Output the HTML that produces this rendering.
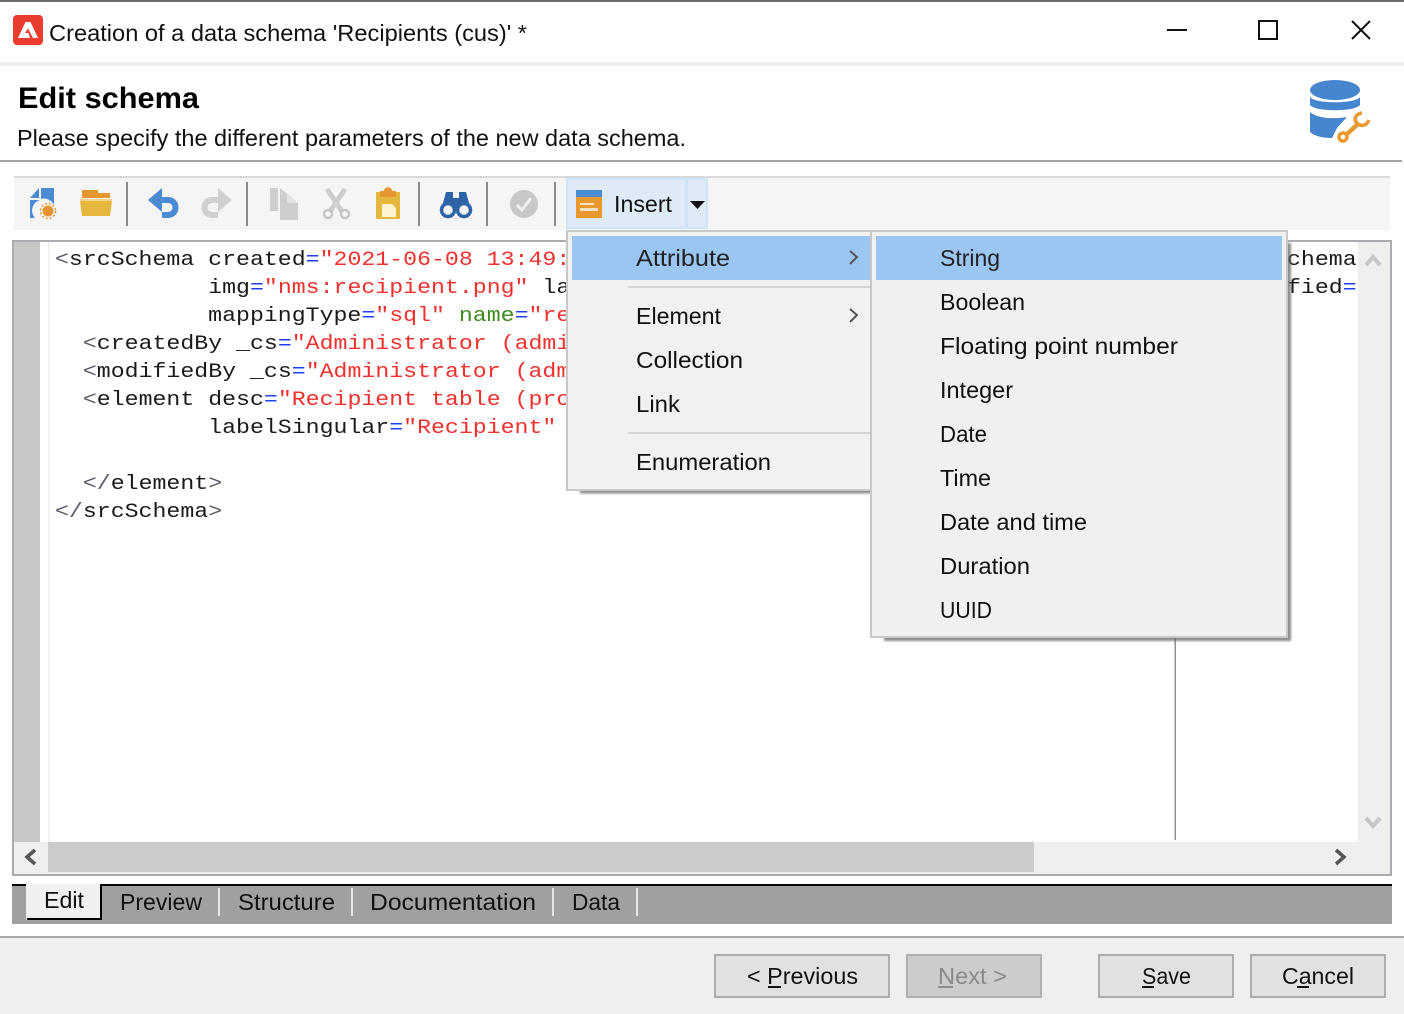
<!DOCTYPE html>
<html><head><meta charset="utf-8"><title>Edit schema</title>
<style>
html,body{margin:0;padding:0;background:#fff;width:1404px;height:1014px;overflow:hidden}
svg{display:block;position:absolute;left:0;top:0}
text{font-family:"Liberation Sans",sans-serif;fill:#111;white-space:pre}
.ui{font-size:23px}
.code text{font-family:"Liberation Mono",monospace;font-size:20px;fill:#1a1a1a}
.g{fill:#5a5a6a}.b{fill:#1c3ff0}.r{fill:#f0302c}.n{fill:#3d8a1e}
</style></head><body>
<svg width="1404" height="1014" viewBox="0 0 1404 1014" xmlns="http://www.w3.org/2000/svg">
<defs>
<filter id="sh" x="-5%" y="-5%" width="112%" height="112%"><feGaussianBlur stdDeviation="1"/></filter>
</defs>
<rect width="1404" height="1014" fill="#fff"/>
<!-- title bar -->
<rect width="1404" height="2" fill="#6d6d6d"/>
<rect x="13" y="15" width="30" height="30" rx="4" fill="#eb3d2f"/>
<path d="M25.500 22 H30.500 L38 38 H33 L28 28.500 L25 33 H28.500 L30 38 H18 Z" fill="#fff"/>
<text class="ui" x="49" y="41" textLength="478" lengthAdjust="spacingAndGlyphs">Creation of a data schema 'Recipients (cus)' *</text>
<rect x="1167" y="29" width="20" height="2" fill="#111"/>
<rect x="1259" y="21" width="18" height="18" fill="none" stroke="#111" stroke-width="2"/>
<path d="M1352 21 L1370 39 M1370 21 L1352 39" stroke="#111" stroke-width="2" fill="none"/>
<rect y="62" width="1404" height="4" fill="#f0f0f0"/>
<!-- header -->
<text x="18" y="108" font-size="30" font-weight="700" textLength="181" lengthAdjust="spacingAndGlyphs" style="fill:#000">Edit schema</text>
<text class="ui" x="17" y="146" textLength="669" lengthAdjust="spacingAndGlyphs">Please specify the different parameters of the new data schema.</text>
<rect y="160" width="1402" height="2" fill="#a5a5a5"/>
<!-- db icon -->
<g>
<ellipse cx="1335" cy="90" rx="25" ry="10" fill="#4686cf"/>
<path d="M1310 97 C1315 104 1355 104 1360 97 V105 C1355 112 1315 112 1310 105 Z" fill="#4686cf"/>
<path d="M1310 112 C1318 119 1335 119 1347 117 L1337 128 L1332 138 C1322 138 1314 136 1310 132 Z" fill="#4686cf"/>
<path d="M1347 134 L1359 123" stroke="#e89a30" stroke-width="4.500" fill="none"/>
<path d="M1362 113 C1355 114 1353 120 1358 124 C1362 127 1367 125 1369 120" stroke="#e89a30" stroke-width="3.500" fill="none"/>
<circle cx="1343" cy="137" r="4" fill="#fff" stroke="#e89a30" stroke-width="3.500"/>
</g>
<!-- toolbar -->
<rect x="14" y="176" width="1376" height="54" fill="#f5f5f5"/>
<rect x="14" y="176" width="1376" height="2" fill="#d9d9d9"/>
<path d="M30 198 L39 188 V198 Z M41 188 H54 V205 A11 11 0 0 0 41 199 Z M30 200 H40 A11 11 0 0 0 35 218 H30 Z" fill="#4a8bd4"/>
<circle cx="48" cy="211" r="5.500" fill="#e8952f"/><circle cx="48" cy="211" r="7.500" fill="none" stroke="#e8952f" stroke-width="1.500" stroke-dasharray="2 2"/>
<path d="M82 190 H98 V193 H110 V198 H82 Z" fill="#e5972f"/>
<rect x="80" y="199" width="32" height="2" fill="#f0d589"/>
<path d="M80 201 H112 L110 216 H82 Z" fill="#e6b73e"/>
<rect x="126" y="182" width="2" height="44" fill="#8a8a8a"/>
<path d="M148 200 L162 188 V212 Z" fill="#4a8bd4"/>
<path d="M160 200 H168 C178 200 178 215 168 215 H162" stroke="#4a8bd4" stroke-width="6" fill="none"/>
<path d="M232 200 L218 188 V212 Z" fill="#d0d0d0"/>
<path d="M220 200 H212 C202 200 202 215 212 215 H218" stroke="#d0d0d0" stroke-width="6" fill="none"/>
<rect x="246" y="182" width="2" height="44" fill="#8a8a8a"/>
<rect x="270" y="188" width="8" height="23" fill="#cdcdcd"/>
<path d="M280 188 L298 203 V220 H280 Z" fill="#cdcdcd"/><path d="M287 203 H298 L287 193 Z" fill="#e2e2e2"/>
<path d="M327 189 L343 213 M345 189 L329 213" stroke="#cdcdcd" stroke-width="5" fill="none"/>
<circle cx="328" cy="214" r="4" fill="#f5f5f5" stroke="#c6c6c6" stroke-width="2.500"/><circle cx="345" cy="214" r="4" fill="#f5f5f5" stroke="#c6c6c6" stroke-width="2.500"/>
<rect x="376" y="192" width="24" height="27" fill="#e6b73e"/>
<path d="M380 191 H384 C384 186 392 186 392 191 H396 V197 H380 Z" fill="#e5972f"/>
<path d="M382 204 H392 L396 208 V217 H382 Z" fill="#fff3d2"/>
<rect x="418" y="182" width="2" height="44" fill="#8a8a8a"/>
<path d="M446 192 H453 V198 H459 V192 H466 L471 210 H441 Z" fill="#2f63a8"/>
<circle cx="448" cy="210" r="6.500" fill="#f5f5f5" stroke="#2f63a8" stroke-width="3.500"/><circle cx="464" cy="210" r="6.500" fill="#f5f5f5" stroke="#2f63a8" stroke-width="3.500"/>
<rect x="486" y="182" width="2" height="44" fill="#8a8a8a"/>
<circle cx="524" cy="204" r="14" fill="#c8c8c8"/>
<path d="M517 205 L522 210 L531 198" stroke="#f0f0f0" stroke-width="3" fill="none"/>
<rect x="554" y="182" width="2" height="44" fill="#8a8a8a"/>
<!-- insert button -->
<rect x="567" y="179" width="119" height="49" fill="#dfeaf7" stroke="#cfe3f8" stroke-width="2"/>
<rect x="687" y="179" width="20" height="49" fill="#dfeaf7" stroke="#cfe3f8" stroke-width="2"/>
<rect x="576" y="190" width="26" height="8" fill="#4a8bd4"/>
<rect x="576" y="197" width="26" height="21" fill="#e8982f"/>
<rect x="580" y="203" width="14" height="2" fill="#f7e3c0"/><rect x="580" y="208" width="18" height="3" fill="#f7e3c0"/>
<text class="ui" x="614" y="212" textLength="58" lengthAdjust="spacingAndGlyphs">Insert</text>
<path d="M690 201 H705 L697.500 209 Z" fill="#111"/>
<!-- editor -->
<rect x="13" y="241" width="1378" height="634" fill="#fff" stroke="#ababb0" stroke-width="2"/>
<rect x="14" y="242" width="26" height="600" fill="#c8c8c8"/>
<rect x="48" y="242" width="1.500" height="600" fill="#eeeeee"/>
<rect x="1358" y="242" width="32" height="600" fill="#efefef"/>
<rect x="14" y="842" width="1376" height="32" fill="#efefef"/>
<rect x="48" y="842" width="986" height="30" fill="#cbcbcb"/>
<rect x="1174.500" y="242" width="1.500" height="598" fill="#8f8f8f"/>
<path d="M1366 265 L1373 257 L1380 265" stroke="#c6c6c6" stroke-width="4" fill="none"/>
<path d="M1366 818 L1373 826 L1380 818" stroke="#c6c6c6" stroke-width="4" fill="none"/>
<path d="M35 850 L27 857 L35 864" stroke="#555" stroke-width="3.500" fill="none"/>
<path d="M1336 850 L1344 857 L1336 864" stroke="#555" stroke-width="3.500" fill="none"/>
<g class="code">
<g transform="translate(55,265) scale(1.161,1)"><text xml:space="preserve"><tspan class="g">&lt;</tspan>srcSchema created<tspan class="b">=</tspan><tspan class="r">"2021-06-08 13:49:</tspan></text></g>
<g transform="translate(55,293) scale(1.161,1)"><text xml:space="preserve">           img<tspan class="b">=</tspan><tspan class="r">"nms:recipient.png"</tspan> la</text></g>
<g transform="translate(55,321) scale(1.161,1)"><text xml:space="preserve">           mappingType<tspan class="b">=</tspan><tspan class="r">"sql"</tspan> <tspan class="n">name</tspan><tspan class="b">=</tspan><tspan class="r">"re</tspan></text></g>
<g transform="translate(55,349) scale(1.161,1)"><text xml:space="preserve">  <tspan class="g">&lt;</tspan>createdBy _cs<tspan class="b">=</tspan><tspan class="r">"Administrator (admi</tspan></text></g>
<g transform="translate(55,377) scale(1.161,1)"><text xml:space="preserve">  <tspan class="g">&lt;</tspan>modifiedBy _cs<tspan class="b">=</tspan><tspan class="r">"Administrator (adm</tspan></text></g>
<g transform="translate(55,405) scale(1.161,1)"><text xml:space="preserve">  <tspan class="g">&lt;</tspan>element desc<tspan class="b">=</tspan><tspan class="r">"Recipient table (pro</tspan></text></g>
<g transform="translate(55,433) scale(1.161,1)"><text xml:space="preserve">           labelSingular<tspan class="b">=</tspan><tspan class="r">"Recipient"</tspan></text></g>
<g transform="translate(55,489) scale(1.161,1)"><text xml:space="preserve">  <tspan class="g">&lt;/</tspan>element<tspan class="g">&gt;</tspan></text></g>
<g transform="translate(55,517) scale(1.161,1)"><text xml:space="preserve"><tspan class="g">&lt;/</tspan>srcSchema<tspan class="g">&gt;</tspan></text></g>
<g transform="translate(1287,265) scale(1.161,1)"><text>chema</text></g>
<g transform="translate(1287,293) scale(1.161,1)"><text>fied<tspan class="b">=</tspan></text></g>
</g>
<!-- tabs -->
<rect x="12" y="884" width="1380" height="40" fill="#a0a0a0"/>
<rect x="12" y="884" width="1380" height="2" fill="#000"/>
<rect x="26" y="884" width="74" height="34" fill="#f0f0f0"/>
<rect x="26" y="918" width="76" height="2" fill="#000"/><rect x="100" y="886" width="2" height="34" fill="#000"/>
<rect x="26" y="918" width="1" height="2" fill="#fff"/>
<text class="ui" x="44" y="908" textLength="40" lengthAdjust="spacingAndGlyphs">Edit</text>
<text class="ui" x="120" y="910" textLength="82" lengthAdjust="spacingAndGlyphs">Preview</text>
<text class="ui" x="238" y="910" textLength="97" lengthAdjust="spacingAndGlyphs">Structure</text>
<text class="ui" x="370" y="910" textLength="166" lengthAdjust="spacingAndGlyphs">Documentation</text>
<text class="ui" x="572" y="910" textLength="48" lengthAdjust="spacingAndGlyphs">Data</text>
<rect x="218" y="888" width="2" height="28" fill="#e6e6e6"/><rect x="351" y="888" width="2" height="28" fill="#e6e6e6"/><rect x="552" y="888" width="2" height="28" fill="#e6e6e6"/><rect x="636" y="888" width="2" height="28" fill="#e6e6e6"/>
<!-- footer -->
<rect y="938" width="1404" height="76" fill="#efefef"/>
<rect y="936" width="1404" height="2" fill="#a8a8a8"/>
<rect x="715" y="955" width="174" height="42" fill="#e1e1e1" stroke="#adadad" stroke-width="2"/>
<rect x="907" y="955" width="134" height="42" fill="#cccccc" stroke="#b0b0b0" stroke-width="2"/>
<rect x="1099" y="955" width="134" height="42" fill="#e1e1e1" stroke="#adadad" stroke-width="2"/>
<rect x="1251" y="955" width="134" height="42" fill="#e1e1e1" stroke="#adadad" stroke-width="2"/>
<text class="ui" x="747" y="984" textLength="111" lengthAdjust="spacingAndGlyphs">&lt; Previous</text>
<rect x="768" y="986" width="13" height="2" fill="#111"/>
<text class="ui" x="938" y="984" textLength="69" lengthAdjust="spacingAndGlyphs" style="fill:#8a8a8a">Next &gt;</text>
<rect x="938" y="986" width="15" height="2" fill="#8a8a8a"/>
<text class="ui" x="1142" y="984" textLength="49" lengthAdjust="spacingAndGlyphs">Save</text>
<rect x="1142" y="986" width="12" height="2" fill="#111"/>
<text class="ui" x="1282" y="984" textLength="72" lengthAdjust="spacingAndGlyphs">Cancel</text>
<rect x="1297" y="986" width="12" height="2" fill="#111"/>
<!-- menu 1 -->
<rect x="580" y="240" width="294" height="253.500" fill="#666" opacity=".75" filter="url(#sh)"/>
<rect x="567" y="231" width="304" height="259" fill="#f1f1f1" stroke="#c8c8c8" stroke-width="2"/>
<rect x="572" y="236" width="298" height="44" fill="#9cc6f2"/>
<rect x="628" y="286" width="242" height="2" fill="#d4d4d4"/>
<rect x="628" y="432" width="242" height="2" fill="#d4d4d4"/>
<text class="ui" x="636" y="266" textLength="94" lengthAdjust="spacingAndGlyphs" style="fill:#222">Attribute</text>
<text class="ui" x="636" y="324" textLength="85" lengthAdjust="spacingAndGlyphs">Element</text>
<text class="ui" x="636" y="368" textLength="107" lengthAdjust="spacingAndGlyphs">Collection</text>
<text class="ui" x="636" y="412" textLength="44" lengthAdjust="spacingAndGlyphs">Link</text>
<text class="ui" x="636" y="470" textLength="135" lengthAdjust="spacingAndGlyphs">Enumeration</text>
<path d="M850 251 L857 257 L850 264" stroke="#555" stroke-width="2" fill="none"/>
<path d="M850 309 L857 315 L850 322" stroke="#555" stroke-width="2" fill="none"/>
<!-- menu 2 -->
<rect x="884" y="243" width="407" height="398" fill="#666" opacity=".75" filter="url(#sh)"/>
<rect x="871" y="231" width="416" height="406" fill="#f0f0f0" stroke="#c8c8c8" stroke-width="2"/>
<rect x="876" y="236" width="406" height="44" fill="#9cc6f2"/>
<text class="ui" x="940" y="266" textLength="60" lengthAdjust="spacingAndGlyphs" style="fill:#222">String</text>
<text class="ui" x="940" y="310" textLength="85" lengthAdjust="spacingAndGlyphs">Boolean</text>
<text class="ui" x="940" y="354" textLength="238" lengthAdjust="spacingAndGlyphs">Floating point number</text>
<text class="ui" x="940" y="398" textLength="73" lengthAdjust="spacingAndGlyphs">Integer</text>
<text class="ui" x="940" y="442" textLength="47" lengthAdjust="spacingAndGlyphs">Date</text>
<text class="ui" x="940" y="486" textLength="51" lengthAdjust="spacingAndGlyphs">Time</text>
<text class="ui" x="940" y="530" textLength="147" lengthAdjust="spacingAndGlyphs">Date and time</text>
<text class="ui" x="940" y="574" textLength="90" lengthAdjust="spacingAndGlyphs">Duration</text>
<text class="ui" x="940" y="618" textLength="52" lengthAdjust="spacingAndGlyphs">UUID</text>
</svg>
</body></html>
